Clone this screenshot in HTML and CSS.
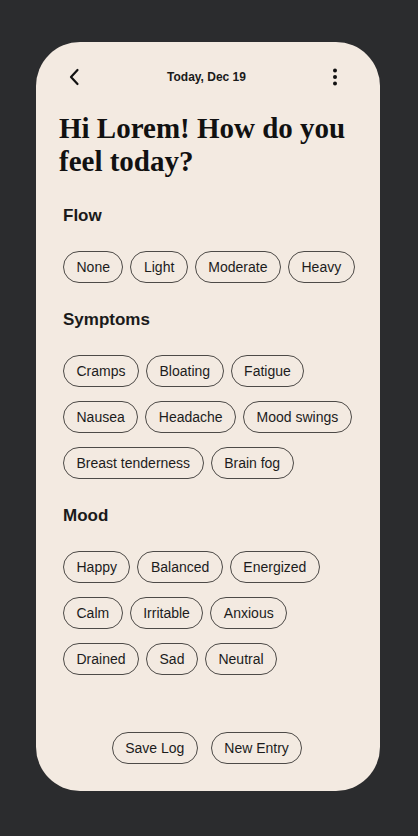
FILE: index.html
```html
<!DOCTYPE html>
<html lang="en">
<head>
  <meta charset="UTF-8">
  <meta name="viewport" content="width=device-width, initial-scale=1.0">
  <title>Daily Log</title>
  <link rel="stylesheet" href="styles.css">
</head>
<body>

<main class="phone">
  <header class="topbar">
    <button class="icon-btn" aria-label="Back">
      <svg width="24" height="24" viewBox="0 0 24 24" fill="none" stroke="#111" stroke-width="2.2" stroke-linecap="round" stroke-linejoin="round">
        <path d="M14.5 5 L8 12 L14.5 19"/>
      </svg>
    </button>
    <span class="date">Today, Dec 19</span>
    <button class="icon-btn" aria-label="More">
      <svg width="24" height="24" viewBox="0 0 24 24" fill="#111">
        <circle cx="12" cy="5.5" r="2"/>
        <circle cx="12" cy="12" r="2"/>
        <circle cx="12" cy="18.5" r="2"/>
      </svg>
    </button>
  </header>

  <h1 class="greeting">Hi Lorem! How do you feel today?</h1>

  <section class="group">
    <h2>Flow</h2>
    <div class="chips">
      <button class="chip">None</button>
      <button class="chip">Light</button>
      <button class="chip">Moderate</button>
      <button class="chip">Heavy</button>
    </div>
  </section>

  <section class="group">
    <h2>Symptoms</h2>
    <div class="chips">
      <button class="chip">Cramps</button>
      <button class="chip">Bloating</button>
      <button class="chip">Fatigue</button>
      <button class="chip">Nausea</button>
      <button class="chip">Headache</button>
      <button class="chip">Mood swings</button>
      <button class="chip">Breast tenderness</button>
      <button class="chip">Brain fog</button>
    </div>
  </section>

  <section class="group">
    <h2>Mood</h2>
    <div class="chips">
      <button class="chip">Happy</button>
      <button class="chip">Balanced</button>
      <button class="chip">Energized</button>
      <button class="chip">Calm</button>
      <button class="chip">Irritable</button>
      <button class="chip">Anxious</button>
      <button class="chip">Drained</button>
      <button class="chip">Sad</button>
      <button class="chip">Neutral</button>
    </div>
  </section>

  <footer class="actions">
    <button class="chip">Save Log</button>
    <button class="chip">New Entry</button>
  </footer>
</main>

</body>
</html>
```

FILE: styles.css
```css
* {
  box-sizing: border-box;
}

body {
  margin: 0;
  padding: 42px 38px 45px 36px;
  background-color: #2b2c2e;
  font-family: 'Liberation Sans', Arial, sans-serif;
  color: #1a1a1a;
}

.phone {
  width: 344px;
  height: 749px;
  padding: 22px 20px 27px 23px;
  border-radius: 44px;
  background-color: #f3eae1;
  display: flex;
  flex-direction: column;
}

.topbar {
  display: grid;
  grid-template-columns: 24px 1fr 24px;
  align-items: center;
  height: 25px;
  padding: 0 13px 0 4px;
}

.icon-btn {
  width: 24px;
  height: 24px;
  padding: 0;
  border: none;
  background: none;
  cursor: pointer;
}

.icon-btn svg {
  display: block;
}

.date {
  text-align: center;
  font-size: 12px;
  font-weight: bold;
  padding-left: 3px;
}

.greeting {
  margin: 23px 0 28px;
  font-family: 'Liberation Serif', 'Times New Roman', serif;
  font-size: 29px;
  line-height: 33px;
  font-weight: bold;
  color: #111;
}

.group {
  padding-left: 4px;
  margin-bottom: 27px;
}

.group h2 {
  margin: 0 0 25px;
  font-size: 17px;
  line-height: 20px;
  font-weight: bold;
}

.chips {
  display: flex;
  flex-wrap: wrap;
  gap: 14px 7px;
}

.chip {
  height: 32px;
  padding: 0 12.5px;
  border: 1px solid #4d4a47;
  border-radius: 16px;
  background: transparent;
  font-family: 'Liberation Sans', Arial, sans-serif;
  font-size: 14px;
  line-height: 30px;
  color: #1c1c1c;
  cursor: pointer;
}

.actions {
  margin-top: auto;
  display: flex;
  justify-content: center;
  gap: 13px;
  padding-right: 5px;
}
```
